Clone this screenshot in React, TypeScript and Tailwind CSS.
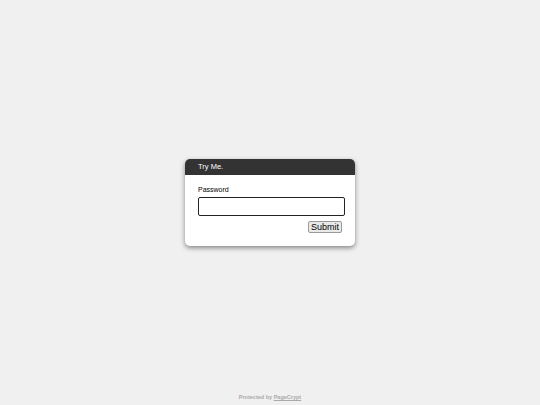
export default function App() {
  return (
    <main className="relative flex h-[405px] w-full items-center justify-center bg-[#f0f0f0] font-['Liberation_Sans',Arial,sans-serif]">
      <div className="w-[170px] overflow-hidden rounded-[5px] bg-white shadow-[0_2px_5px_rgba(0,0,0,0.45)]">
        <div className="flex h-[16px] items-center bg-[#333333] pl-[13px] text-[7.5px] text-white">Try Me.</div>
        <form className="flex flex-col pb-[13px] pl-[13px] pr-[10px] pt-[10px]" onSubmit={(e) => e.preventDefault()}>
          <label className="text-[7px] leading-[9px] text-black">Password</label>
          <input
            type="password"
            autoFocus
            className="mt-[3px] h-[19px] w-[147px] rounded-[2px] border border-[#222] bg-white px-[2px] text-[9px] outline-none"
          />
          <div className="mt-[5px] flex justify-end pr-[3px]">
            <button className="h-[12px] rounded-[2px] border border-[#999] bg-[#e9e9e9] px-[2px] text-[9px] leading-[9px] text-black">Submit</button>
          </div>
        </form>
      </div>
      <footer className="absolute bottom-[4px] left-0 right-0 text-center text-[5.5px] font-bold text-[#aaaaaa]">
        Protected by <span className="underline">PageCrypt</span>
      </footer>
    </main>
  );
}
